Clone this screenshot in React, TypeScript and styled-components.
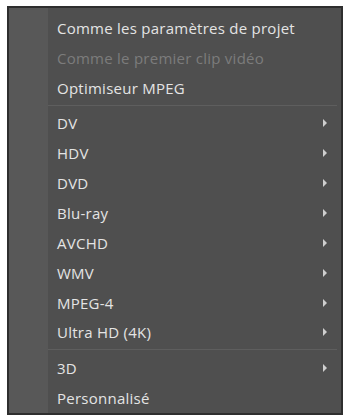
import styled, { createGlobalStyle } from "styled-components";

const GlobalStyle = createGlobalStyle`
  html, body {
    margin: 0;
    padding: 0;
    background: #ffffff;
  }
`;

type Entry =
  | { kind: "item"; label: string; disabled?: boolean; submenu?: boolean }
  | { kind: "separator" };

const entries: Entry[] = [
  { kind: "item", label: "Comme les paramètres de projet" },
  { kind: "item", label: "Comme le premier clip vidéo", disabled: true },
  { kind: "item", label: "Optimiseur MPEG" },
  { kind: "separator" },
  { kind: "item", label: "DV", submenu: true },
  { kind: "item", label: "HDV", submenu: true },
  { kind: "item", label: "DVD", submenu: true },
  { kind: "item", label: "Blu-ray", submenu: true },
  { kind: "item", label: "AVCHD", submenu: true },
  { kind: "item", label: "WMV", submenu: true },
  { kind: "item", label: "MPEG-4", submenu: true },
  { kind: "item", label: "Ultra HD (4K)", submenu: true },
  { kind: "separator" },
  { kind: "item", label: "3D", submenu: true },
  { kind: "item", label: "Personnalisé" },
];

export default function App() {
  return (
    <>
      <GlobalStyle />
      <Page>
        <Menu>
          {entries.map((e, i) =>
            e.kind === "separator" ? (
              <Separator key={i} />
            ) : (
              <Item key={i} $disabled={e.disabled}>
                <Label>{e.label}</Label>
                {e.submenu && <Arrow />}
              </Item>
            )
          )}
        </Menu>
      </Page>
    </>
  );
}

const Page = styled.div`
  padding: 6px 0 0 7px;
`;

const Menu = styled.div`
  box-sizing: border-box;
  width: 336px;
  height: 409px;
  border: 2px solid #2e2e2e;
  padding: 5px 4px 0 0;
  display: flex;
  flex-direction: column;
  background: linear-gradient(to right, #585858 0 39px, #4f4f4f 39px);
  font-family: "Open Sans", "Noto Sans", sans-serif;
  font-size: 15px;
`;

const Item = styled.div<{ $disabled?: boolean }>`
  display: flex;
  align-items: center;
  height: 30px;
  padding: 0 10px 0 48px;
  color: ${(p) => (p.$disabled ? "#7c7c7c" : "#e4e4e4")};
`;

const Label = styled.span`
  flex: 1;
  white-space: nowrap;
  letter-spacing: 0.25px;
`;

const Arrow = styled.span`
  width: 0;
  height: 0;
  border-top: 4px solid transparent;
  border-bottom: 4px solid transparent;
  border-left: 4px solid #cfcfcf;
`;

const Separator = styled.div`
  height: 1px;
  margin: 2px 0 3px 39px;
  background: #5e5e5e;
`;
